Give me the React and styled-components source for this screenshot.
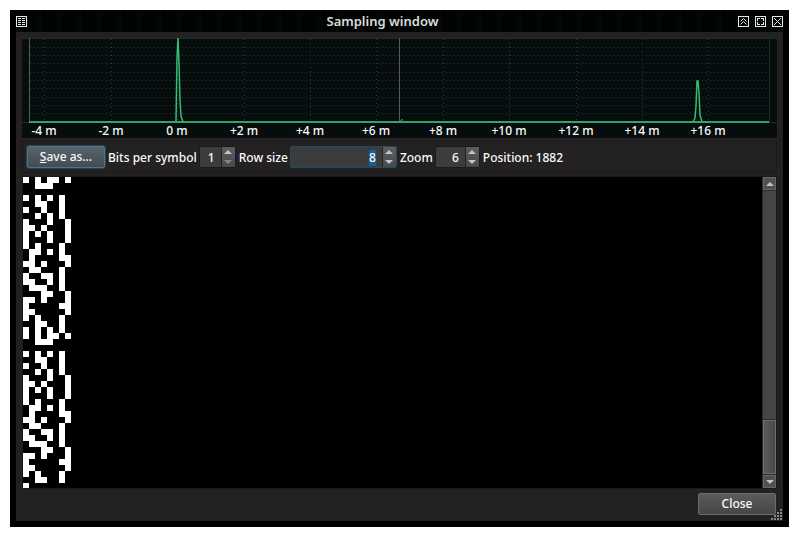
import React, { useState } from "react";
import styled, { createGlobalStyle, css } from "styled-components";

const Global = createGlobalStyle`
  * { box-sizing: border-box; }
  html, body, #root { height: 100%; }
  body {
    margin: 0;
    background: #fff;
    color: #fafafa;
    font: 500 12px/16px "Noto Sans", "Open Sans", sans-serif;
  }
  button, input { font: inherit; color: inherit; }
`;

const Desktop = styled.div`
  height: 100%;
  min-height: 360px;
  padding: 10px 14px 14px 10px;
`;

const Window = styled.main`
  display: flex;
  flex-direction: column;
  height: 100%;
  padding: 0 6px 6px;
  background: #000201;
`;

const TitleBar = styled.header`
  display: flex;
  align-items: center;
  justify-content: space-between;
  flex: none;
  height: 22px;
  background: repeating-linear-gradient(90deg, #020604 0 7px, #000201 7px 9px, #010403 9px 20px);
`;

const Title = styled.h1`
  margin: 0;
  font-size: 13px;
  line-height: 20px;
  font-weight: 600;
  color: #dcdcdc;
`;

const TitleButtons = styled.div`
  display: flex;
  gap: 6px;
`;

const TitleButton = styled.button`
  width: 11px;
  height: 11px;
  padding: 0;
  border: 0;
  background: none;
  svg { display: block; }
`;

const Body = styled.div`
  position: relative;
  display: flex;
  flex-direction: column;
  flex: 1;
  min-height: 0;
  padding: 6px;
  background: #232122;
`;

const Plot = styled.section`
  flex: none;
  height: 100px;
  margin-bottom: 3px;
  background: #070d0d;
  > svg { display: block; width: 100%; height: 100%; }
  text { fill: #fafafa; text-anchor: middle; }
`;

const Toolbar = styled.form`
  display: flex;
  align-items: center;
  flex: none;
  height: 32px;
  padding: 0 4px;
  gap: 3px;
  margin-bottom: 3px;
  border: 1px solid #1b191a;
  white-space: nowrap;
`;

const PushButton = styled.button`
  width: 78px;
  height: 22px;
  padding: 0;
  border: 1px solid #6a6c6e;
  border-radius: 2px;
  background: linear-gradient(#5a5b5d, #454648);
  ${(p) => p.$focused && css`
    border-color: #5f7078;
    background: linear-gradient(#57626a, #434c52);
    box-shadow: 0 0 0 1px #1c4763;
  `}
`;

const Caption = styled.span`
  padding-top: 2px;
`;

const Field = styled.label`
  display: flex;
  align-items: center;
  gap: 2px;
`;

const Spin = styled.span`
  display: flex;
  width: ${(p) => p.$width};
  height: 22px;
  border: 1px solid ${(p) => (p.$focused ? "#1a4c6c" : "#1a1a1a")};
  border-radius: 2px;
  background: #3c3c3c;
`;

const SpinInput = styled.input`
  flex: 1;
  min-width: 0;
  padding: 1px 6px 0 0;
  border: 0;
  outline: 0;
  background: none;
  text-align: right;
  &::selection { background: #14608f; color: #fafafa; }
`;

const SpinArrows = styled.span`
  display: grid;
  place-items: center;
  width: 14px;
  border-left: 1px solid #222;
  background: linear-gradient(#5c5d5e, #48494a);
`;

const Viewer = styled.section`
  display: flex;
  flex: 1;
  min-height: 0;
  border: 1px solid #1a1a1a;
  background: #000;
`;

const Symbols = styled.svg`
  flex: 1;
  min-width: 0;
  height: 100%;
`;

const ScrollBar = styled.div`
  display: flex;
  flex-direction: column;
  width: 14px;
  background: #464647;
  border-left: 1px solid #2a2a2a;
`;

const ScrollButton = styled.button`
  display: grid;
  place-items: center;
  height: 13px;
  padding: 0;
  border: 1px solid #686868;
  background: #505051;
`;

const ScrollTrack = styled.div`
  display: flex;
  align-items: flex-end;
  flex: 1;
  min-height: 0;
  border: 1px solid #2a2a2a;
  border-width: 1px 0;
`;

const ScrollThumb = styled.div`
  width: 100%;
  height: 19%;
  border: 1px solid #6e6e6e;
  background: linear-gradient(90deg, #5a5a5b, #4a4a4b);
  box-shadow: 0 -1px #2a2a2a;
`;

const Footer = styled.footer`
  display: flex;
  justify-content: flex-end;
  flex: none;
  padding: 4px 1px 0;
`;

const Grip = styled.svg`
  position: absolute;
  right: 0;
  bottom: 0;
`;

const ROWS = [
  "10101101", "00111000", "00000000", "10101010", "00110010", "10010010",
  "00101010", "10001001", "11010001", "10101001", "10001001", "10100010",
  "01101010", "01000011", "11010001", "01100010", "10011010", "11001010",
  "01110010", "00011001", "11010001", "10000011", "11000001", "10100010",
  "00110010", "10101010",
];
const ROW_COUNT = 52;
const CELL = 6;
const LAST_ROW = "10000000";

const PLOT_WIDTH = 755;
const TICKS = [
  ["-4 m", 22], ["-2 m", 89], ["0 m", 155], ["+2 m", 222], ["+4 m", 288], ["+6 m", 354],
  ["+8 m", 421], ["+10 m", 487], ["+12 m", 554], ["+14 m", 620], ["+16 m", 686],
];
const LEVELS = [9, 17, 25, 34, 42, 50, 59, 67, 75];

function Frame({ children, thin }) {
  return (
    <svg width="11" height="11" viewBox="0 0 11 11" fill="none" stroke="#e8e8e8" shapeRendering={thin ? "auto" : "crispEdges"}>
      <rect x="0.5" y="0.5" width="10" height="10" />
      {children}
    </svg>
  );
}

function Arrow({ up, dim }) {
  return (
    <svg width="8" height="4" viewBox="0 0 8 4" aria-hidden="true">
      <path d={up ? "M0 4L4 0L8 4Z" : "M0 0L4 4L8 0Z"} fill={dim ? "#858585" : "#c4c4c4"} />
    </svg>
  );
}

function SpinBox({ label, value, width, focused, atMinimum }) {
  const [v, setV] = useState(value);
  return (
    <Field>
      <Caption>{label}</Caption>
      <Spin $width={width} $focused={focused}>
        <SpinInput
          value={v}
          inputMode="numeric"
          autoFocus={focused}
          onFocus={(e) => e.target.select()}
          onChange={(e) => setV(e.target.value)}
        />
        <SpinArrows>
          <Arrow up />
          <Arrow dim={atMinimum} />
        </SpinArrows>
      </Spin>
    </Field>
  );
}

function Waveform() {
  return (
    <Plot aria-label="Waveform">
      <svg>
        <svg viewBox={`0 0 ${PLOT_WIDTH} 100`} width="100%" height="100%" preserveAspectRatio="none">
          <g stroke="#1b3d38" strokeDasharray="1 3" shapeRendering="crispEdges">
            {LEVELS.map((y) => <path key={y} d={`M8 ${y + 0.5}H747`} />)}
            {TICKS.map(([t, x]) => <path key={t} d={`M${x + 0.5} 1V84`} />)}
          </g>
          <path d="M0 0.5H755M0 84.5H755M747.5 0V84" stroke="#16312e" shapeRendering="crispEdges" />
          <path d="M7.5 0V84M377.5 0V84" stroke="#565a5a" shapeRendering="crispEdges" />
          <path d="M7 84H747" stroke="#2fa567" strokeWidth="2" shapeRendering="crispEdges" />
          <path d="M154 83L155 20L156 0L157 25L158 62L159 78L161 84" fill="none" stroke="#34bb74" strokeWidth="1.5" />
          <path d="M671 84L673 80L674 68L675 43L676 43L677 55L678 77L680 84" fill="none" stroke="#34bb74" strokeWidth="1.5" />
          <path d="M378 83L380 81L381 84" fill="none" stroke="#2c8a59" />
        </svg>
        {TICKS.map(([t, x]) => (
          <text key={t} x={`${(x / PLOT_WIDTH) * 100}%`} y="97">{t}</text>
        ))}
      </svg>
    </Plot>
  );
}

function SymbolView() {
  const cells = [];
  for (let r = 0; r < ROW_COUNT; r++) {
    const bits = r === ROW_COUNT - 1 ? LAST_ROW : ROWS[r % ROWS.length];
    [...bits].forEach((b, c) => {
      if (b === "1") cells.push(<rect key={`${r}-${c}`} x={c * CELL} y={r * CELL} width={CELL} height={CELL} />);
    });
  }
  return <Symbols fill="#fff" shapeRendering="crispEdges" aria-label="Symbols">{cells}</Symbols>;
}

export default function App() {
  return (
    <Desktop>
      <Global />
      <Window>
        <TitleBar>
          <TitleButtons>
            <TitleButton aria-label="Window menu">
              <Frame><path d="M2 2.5H5M6 2.5H9M2 4.5H5M6 4.5H9M2 6.5H5M6 6.5H9M2 8.5H5M6 8.5H9" /></Frame>
            </TitleButton>
          </TitleButtons>
          <Title>Sampling window</Title>
          <TitleButtons>
            <TitleButton aria-label="Shade">
              <Frame thin><path d="M2.5 5.5L5.5 2.5L8.5 5.5M2.5 8.5L5.5 5.5L8.5 8.5" /></Frame>
            </TitleButton>
            <TitleButton aria-label="Maximize">
              <Frame><path d="M2.5 5V2.5H5M6 2.5H8.5V5M8.5 6V8.5H6M5 8.5H2.5V6" /></Frame>
            </TitleButton>
            <TitleButton aria-label="Close window">
              <Frame thin><path d="M2 2L9 9M9 2L2 9" /></Frame>
            </TitleButton>
          </TitleButtons>
        </TitleBar>
        <Body>
          <Waveform />
          <Toolbar onSubmit={(e) => e.preventDefault()}>
            <PushButton type="button" $focused><u>S</u>ave as...</PushButton>
            <SpinBox label="Bits per symbol" value="1" width="37px" atMinimum />
            <SpinBox label="Row size" value="8" width="107px" focused />
            <SpinBox label="Zoom" value="6" width="45px" />
            <Caption>Position: 1882</Caption>
          </Toolbar>
          <Viewer>
            <SymbolView />
            <ScrollBar>
              <ScrollButton aria-label="Scroll up"><Arrow up /></ScrollButton>
              <ScrollTrack><ScrollThumb /></ScrollTrack>
              <ScrollButton aria-label="Scroll down"><Arrow /></ScrollButton>
            </ScrollBar>
          </Viewer>
          <Footer><PushButton type="button">Close</PushButton></Footer>
          <Grip width="12" height="12" viewBox="0 0 12 12" fill="#8a8a8a" aria-hidden="true">
            <path d="M9 0h2v2h-2zM6 3h2v2h-2zM9 3h2v2h-2zM3 6h2v2h-2zM6 6h2v2h-2zM9 6h2v2h-2zM0 9h2v2h-2zM3 9h2v2h-2zM6 9h2v2h-2zM9 9h2v2h-2z" />
          </Grip>
        </Body>
      </Window>
    </Desktop>
  );
}
